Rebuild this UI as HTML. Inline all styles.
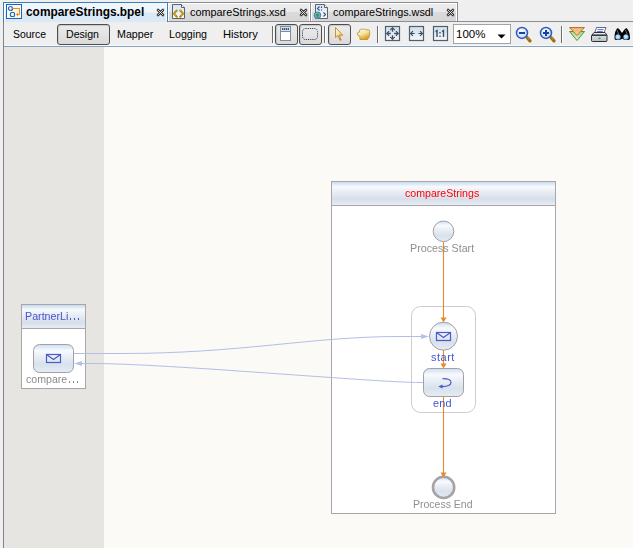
<!DOCTYPE html>
<html><head><meta charset="utf-8">
<style>
html,body{margin:0;padding:0;}
body{width:633px;height:548px;overflow:hidden;position:relative;background:#efefef;font-family:"Liberation Sans",sans-serif;}
.a{position:absolute;}
.t{position:absolute;white-space:nowrap;line-height:1;}
.g{will-change:transform;}
.btn{position:absolute;border:1px solid #4e4e4e;border-radius:3px;background:linear-gradient(#ececec 0,#e4e4e4 50%,#dadada 100%);box-shadow:inset 1px 1px 1px #c8c8c8;}
svg{position:absolute;left:0;top:0;}
</style></head><body>

<!-- tabs -->
<div class="a" style="left:3px;top:2px;width:163px;height:19px;border:1px solid #3a7fba;border-bottom:none;background:linear-gradient(#f0f7fc 0,#edf5fb 48%,#dbeaf6 52%,#d9e9f5 100%);"></div>
<div class="a" style="left:4px;top:3px;width:1px;height:18px;background:#fff;"></div>
<div class="a" style="left:166px;top:3px;width:1px;height:18px;background:#fff;"></div>
<div class="a" style="left:168px;top:2px;width:142px;height:19px;border-top:1px solid #8a8e94;background:linear-gradient(#ececec 0,#e9e9e9 45%,#dadada 50%,#d6d6d6 100%);box-shadow:inset 1px 1px 0 #fff,inset -1px 0 0 #fff;"></div>
<div class="a" style="left:310px;top:2px;width:146px;height:19px;border:1px solid #8a8e94;border-bottom:none;background:linear-gradient(#ececec 0,#e9e9e9 45%,#dadada 50%,#d6d6d6 100%);box-shadow:inset 1px 1px 0 #fff,inset -1px 0 0 #fff;"></div>
<div class="a" style="left:168px;top:21px;width:465px;height:1px;background:#8a8e94;"></div>

<div class="t" style="left:26px;top:7px;font-size:11.9px;font-weight:bold;color:#000;">compareStrings.bpel</div>
<div class="t" style="left:190px;top:7px;font-size:10.85px;color:#000;">compareStrings.xsd</div>
<div class="t" style="left:333px;top:7px;font-size:10.8px;color:#000;">compareStrings.wsdl</div>

<!-- toolbar -->
<div class="a" style="left:3px;top:22px;width:1px;height:526px;background:#7f838a;"></div>
<div class="a" style="left:4px;top:45px;width:629px;height:1px;background:#f8f8f8;"></div>
<div class="a" style="left:4px;top:46px;width:629px;height:1px;background:#86a2bf;"></div>

<div class="btn" style="left:57px;top:24px;width:51px;height:19px;"></div>
<div class="btn" style="left:275px;top:24px;width:21px;height:19px;"></div>
<div class="btn" style="left:299px;top:24px;width:21px;height:19px;"></div>
<div class="btn" style="left:328px;top:24px;width:21px;height:19px;"></div>

<div class="t" style="left:13px;top:30px;font-size:10.45px;color:#000;">Source</div>
<div class="t" style="left:66px;top:29px;font-size:10.6px;color:#000;">Design</div>
<div class="t" style="left:117px;top:29px;font-size:10.7px;color:#000;">Mapper</div>
<div class="t" style="left:169px;top:29px;font-size:10.7px;color:#000;">Logging</div>
<div class="t" style="left:223px;top:29px;font-size:11.2px;color:#000;">History</div>

<!-- combo -->
<div class="a" style="left:453px;top:24px;width:56px;height:18px;border:1px solid #a3a3a3;background:#fff;"></div>
<div class="t" style="left:456px;top:29px;font-size:11.5px;color:#000;">100%</div>

<!-- canvas -->
<div class="a" style="left:4px;top:47px;width:100px;height:501px;background:#e7e5e1;"></div>
<div class="a" style="left:104px;top:47px;width:529px;height:501px;background:#fbfaf6;"></div>

<svg width="633" height="548" viewBox="0 0 633 548">
<defs>
 <linearGradient id="pg" x1="0" y1="0" x2="0" y2="1"><stop offset="0" stop-color="#d8e4f0"/><stop offset="1" stop-color="#f8fafc"/></linearGradient>
 <linearGradient id="hdr" x1="0" y1="0" x2="0" y2="1"><stop offset="0" stop-color="#c6dcf2"/><stop offset="0.2" stop-color="#f7f9fc"/><stop offset="0.75" stop-color="#d6deea"/><stop offset="1" stop-color="#e6edf5"/></linearGradient>
 <linearGradient id="btn" x1="0" y1="0" x2="0" y2="1"><stop offset="0" stop-color="#c9def2"/><stop offset="0.22" stop-color="#f8fafd"/><stop offset="0.7" stop-color="#d8e1ec"/><stop offset="1" stop-color="#e4ecf5"/></linearGradient>
 <linearGradient id="zi" x1="0" y1="0" x2="0" y2="1"><stop offset="0" stop-color="#d4e0ea"/><stop offset="0.5" stop-color="#dfe8f0"/><stop offset="0.52" stop-color="#e8eef4"/><stop offset="1" stop-color="#f2f6f9"/></linearGradient>
 <linearGradient id="gold" x1="0" y1="0" x2="0.5" y2="1"><stop offset="0" stop-color="#fffef8"/><stop offset="0.55" stop-color="#f6e4a0"/><stop offset="1" stop-color="#dca020"/></linearGradient>
 <linearGradient id="org" x1="0" y1="0" x2="0" y2="1"><stop offset="0" stop-color="#f0b070"/><stop offset="1" stop-color="#f8d0a0"/></linearGradient>
 <linearGradient id="grn" x1="0" y1="0" x2="0" y2="1"><stop offset="0" stop-color="#a8d890"/><stop offset="1" stop-color="#e0f2d8"/></linearGradient>
 <linearGradient id="prn" x1="0" y1="0" x2="0" y2="1"><stop offset="0" stop-color="#eef0f4"/><stop offset="1" stop-color="#b8bcc4"/></linearGradient>
 <radialGradient id="lens" cx="0.45" cy="0.45" r="0.6"><stop offset="0" stop-color="#e8f6ff"/><stop offset="0.6" stop-color="#8cc8f8"/><stop offset="1" stop-color="#4a90d8"/></radialGradient>
 <radialGradient id="mag" cx="0.4" cy="0.35" r="0.7"><stop offset="0" stop-color="#ffffff"/><stop offset="0.7" stop-color="#cfe0f6"/><stop offset="1" stop-color="#b0c8ec"/></radialGradient>
</defs>

<!-- tab icons -->
<g>
 <rect x="6.5" y="4.5" width="15" height="14" fill="#fdf5df" stroke="#1565d0" stroke-width="1"/>
 <circle cx="10.5" cy="8.5" r="2" fill="#fdf5df" stroke="#1565d0" stroke-width="1.2"/>
 <rect x="10.5" y="12.5" width="4" height="4" rx="1" fill="#fdf5df" stroke="#1565d0" stroke-width="1.2"/>
 <path d="M12.5 8.5H19.5V14.5H17" fill="none" stroke="#f08a20" stroke-width="1"/>
 <path d="M16 14.5L18 12.5V16.5Z" fill="#f08a20"/>
</g>
<g>
 <path d="M172.5 4.5H181.5L184.5 7.5V18.5H172.5Z" fill="url(#pg)" stroke="#59636e" stroke-width="1"/>
 <path d="M181.5 4.5V7.5H184.5" fill="#fff" stroke="#59636e" stroke-width="1"/>
 <path d="M176.8 10.5L173.8 13.6L176.8 16.7M180.2 10.5L183.2 13.6L180.2 16.7" fill="none" stroke="#b08000" stroke-width="2" stroke-linecap="round" stroke-linejoin="round"/>
 <path d="M176.8 10.5L173.8 13.6L176.8 16.7M180.2 10.5L183.2 13.6L180.2 16.7" fill="none" stroke="#f6e4a0" stroke-width="0.8" stroke-dasharray="0.8 0.9"/>
</g>
<g>
 <path d="M315.5 4.5H324.5L327.5 7.5V18.5H315.5Z" fill="url(#pg)" stroke="#59636e" stroke-width="1"/>
 <path d="M324.5 4.5V7.5H327.5" fill="#fff" stroke="#59636e" stroke-width="1"/>
 <path d="M319.5 6.5L317.5 8.5L319.5 10.5M321.5 6.5V8M321.5 9.5V10.5M323.5 12.5L325.5 14.5L323.5 16.5" fill="none" stroke="#2d4d7a" stroke-width="1.1"/>
 <circle cx="317.5" cy="15.2" r="3.3" fill="#78b0e0" stroke="#4d78a8" stroke-width="1"/>
 <path d="M315 15.5L317.5 13L320 15.5H318.5V17.5H316.5V15.5Z" fill="#30a030"/>
</g>
<!-- close icons -->
<g fill="none" stroke-linecap="round">
 <path d="M158 10L163 15M163 10L158 15" stroke="#333" stroke-width="2.6"/>
 <path d="M158 10L163 15M163 10L158 15" stroke="#fff" stroke-width="0.8"/>
 <path d="M301 10L306 15M306 10L301 15" stroke="#333" stroke-width="2.6"/>
 <path d="M301 10L306 15M306 10L301 15" stroke="#fff" stroke-width="0.8"/>
 <path d="M448 10L453 15M453 10L448 15" stroke="#333" stroke-width="2.6"/>
 <path d="M448 10L453 15M453 10L448 15" stroke="#fff" stroke-width="0.8"/>
</g>

<!-- toolbar separators -->
<g stroke-width="1">
 <path d="M272.5 26V43" stroke="#6e6e6e"/><path d="M273.5 26V43" stroke="#fff"/>
 <path d="M324.5 26V43" stroke="#6e6e6e"/><path d="M325.5 26V43" stroke="#fff"/>
 <path d="M377.5 26V43" stroke="#6e6e6e"/><path d="M378.5 26V43" stroke="#fff"/>
 <path d="M561.5 26V43" stroke="#6e6e6e"/><path d="M562.5 26V43" stroke="#fff"/>
</g>
<!-- toolbar icons -->
<g>
 <rect x="280.5" y="26.5" width="10" height="14" fill="#fff" stroke="#7e8ea2"/>
 <rect x="281" y="27" width="9" height="4" fill="#d6e2ee"/>
 <path d="M280.5 31.5H290.5" stroke="#7e8ea2"/>
 <path d="M282 29H289.5" stroke="#1a2a3a" stroke-width="1.4" stroke-dasharray="1.3 0.6"/>
 <rect x="302.5" y="28.5" width="15" height="11" rx="3" fill="none" stroke="#2e3e5e" stroke-dasharray="1.2 1"/>
 <path d="M335.5 27.5V37.5L337.8 35.5L340.2 40.5L341.2 40L339.2 35.2H342.8Z" fill="url(#gold)" stroke="#c08a28" stroke-width="0.9" stroke-linejoin="round"/>
 <path d="M360 39.5H367.5Q369.6 37.5 369.6 34.5V31.6A1.4 1.4 0 0 0 367.1 30.4A1.4 1.4 0 0 0 364.6 29.7A1.4 1.4 0 0 0 362.1 29.7A1.4 1.4 0 0 0 359.6 30.7V32Q357.2 32 357.2 33.8Q357.5 35.8 359.8 36.2Z" fill="url(#gold)" stroke="#b88a30" stroke-width="0.8"/>
</g>
<g>
 <rect x="385.5" y="26.5" width="14" height="14" fill="url(#zi)" stroke="#4f5f6f" stroke-width="1.2"/>
 <path d="M392.5 27.8V31.8M392.5 35.2V39.2M386.8 33.5H390.8M394.2 33.5H398.2" stroke="#3d4f62" stroke-width="1.3"/>
 <path d="M390.2 30.1L392.5 27.8L394.8 30.1M390.2 36.9L392.5 39.2L394.8 36.9M389.1 31.2L386.8 33.5L389.1 35.8M395.9 31.2L398.2 33.5L395.9 35.8" fill="none" stroke="#3d4f62" stroke-width="1.2"/>
 <rect x="409.5" y="26.5" width="14" height="14" fill="url(#zi)" stroke="#4f5f6f" stroke-width="1.2"/>
 <path d="M410.6 33.5H414.6M418.4 33.5H422.4M412.9 31.2L410.6 33.5L412.9 35.8M420.1 31.2L422.4 33.5L420.1 35.8" fill="none" stroke="#3d4f62" stroke-width="1.2"/>
 <rect x="433.5" y="26.5" width="14" height="14" fill="url(#zi)" stroke="#4f5f6f" stroke-width="1.2"/>
 <path d="M435.5 31.5L437 30.5V37M442 31.5L443.5 30.5V37" fill="none" stroke="#3d4f62" stroke-width="1.4"/>
 <rect x="439.3" y="32" width="1.4" height="1.4" fill="#3d4f62"/>
 <rect x="439.3" y="35.5" width="1.4" height="1.4" fill="#3d4f62"/>
</g>
<path d="M497.5 34.5H505.5L501.5 38.5Z" fill="#000"/>
<!-- zoom out / in -->
<g>
 <path d="M527 37.5L530 40.8" stroke="#9a6a08" stroke-width="3.2" stroke-linecap="round"/>
 <path d="M527.3 37.5L529.3 39.6" stroke="#f0a020" stroke-width="1"/>
 <circle cx="522" cy="32.9" r="5.5" fill="url(#mag)" stroke="#2a5cc0" stroke-width="1.5"/>
 <path d="M519 33H525" stroke="#1a40a0" stroke-width="2"/>
 <path d="M551 37.5L554 40.8" stroke="#9a6a08" stroke-width="3.2" stroke-linecap="round"/>
 <path d="M551.3 37.5L553.3 39.6" stroke="#f0a020" stroke-width="1"/>
 <circle cx="546" cy="32.9" r="5.5" fill="url(#mag)" stroke="#2a5cc0" stroke-width="1.5"/>
 <path d="M543 33H549M546 30V36" stroke="#1a40a0" stroke-width="2"/>
</g>
<!-- chevrons, printer, binoculars -->
<g>
 <path d="M569.5 31.5H584.5L577 40.5Z" fill="url(#grn)" stroke="#4a9a30" stroke-width="1" stroke-linejoin="round"/>
 <path d="M569.5 27.5H584.5L577 35.5Z" fill="url(#org)" stroke="#c47020" stroke-width="1" stroke-linejoin="round"/>
 <path d="M596.5 27.5H606L603.8 33.5H594.5Z" fill="#fff" stroke="#4a5a72" stroke-width="0.9"/>
 <path d="M597.5 29.6H603.5M596.8 31.6H602.8" stroke="#4a58c8" stroke-width="0.9"/>
 <path d="M591.5 35.5L594 32.5H605L607 35V40.5Q607 41.5 606 41.5H592.5Q591.5 41.5 591.5 40.5Z" fill="url(#prn)" stroke="#2a3038" stroke-width="1"/>
 <path d="M592 35.2H606.5" stroke="#2a3038" stroke-width="1.5"/>
 <rect x="598.5" y="37.5" width="2" height="1.6" fill="#10c030"/>
 <path d="M614.5 38C614.5 33 615.5 29.5 617.8 28C619.5 29 620.5 31 621.5 32.5H622.5C623.5 31 624.5 29 626.2 28C628.5 29.5 630 33 630 38C630 40 628.5 40 626.5 40C624 40 622.8 39 622.3 38.5C621.8 39 620.5 40 618 40C615.5 40 614.5 40 614.5 38Z" fill="#000"/>
 <path d="M617 30L618.5 34" stroke="#888" stroke-width="0.8"/>
 <path d="M625.5 30L627 34" stroke="#888" stroke-width="0.8"/>
 <circle cx="618" cy="37" r="2.7" fill="url(#lens)"/>
 <circle cx="626" cy="37" r="2.7" fill="url(#lens)"/>
</g>

<!-- partner link -->
<rect x="21.5" y="304.5" width="64" height="84" fill="#fff" stroke="#a9a5a8"/>
<rect x="22" y="305" width="63" height="23" fill="url(#hdr)"/>
<path d="M22 328.5H85" stroke="#a9a5a8"/>
<rect x="33.5" y="344.5" width="40" height="28" rx="6" fill="url(#btn)" stroke="#a39fa3"/>
<rect x="46.5" y="354.5" width="14" height="8" fill="none" stroke="#4a5cc4" stroke-width="1.2"/>
<path d="M46.5 354.5L53.5 359.5L60.5 354.5" fill="none" stroke="#4a5cc4" stroke-width="1.2"/>

<g fill="#4656d0"><rect x="70" y="318" width="1" height="2"/><rect x="74" y="318" width="1" height="2"/><rect x="78" y="318" width="1" height="2"/></g>
<g fill="#8c8c8c"><rect x="69" y="381" width="1" height="2"/><rect x="73" y="381" width="1" height="2"/><rect x="77" y="381" width="1" height="2"/></g>
<!-- process -->
<rect x="331.5" y="181.5" width="224" height="332" fill="#fff" stroke="#a9a5a8"/>
<rect x="332" y="182" width="223" height="23" fill="url(#hdr)"/>
<path d="M332 205.5H555" stroke="#a9a5a8"/>
<rect x="411.5" y="306.5" width="64" height="106" rx="9" fill="none" stroke="#cfcccf"/>

<!-- links -->
<g fill="none" stroke="#b4bde6" stroke-width="1">
 <path d="M74 353.5H122C242 353.5 310 336.5 400 336.5H425"/>
 <path d="M423 382.5H420C375 382.5 167 363.5 92 363.5H76"/>
</g>
<path d="M421 334L429 336.5L421 339Z" fill="#b8c0e8"/>
<path d="M82 361L74 363.5L82 366Z" fill="#b8c0e8"/>

<circle cx="443.5" cy="231.3" r="10.3" fill="url(#btn)" stroke="#a39fa3"/>
<circle cx="443.5" cy="336.2" r="14" fill="url(#btn)" stroke="#a39fa3"/>
<rect x="436.5" y="332.5" width="14" height="8" fill="none" stroke="#4a5cc4" stroke-width="1.2"/>
<path d="M436.5 332.5L443.5 337.5L450.5 332.5" fill="none" stroke="#4a5cc4" stroke-width="1.2"/>
<rect x="423.5" y="368.5" width="40" height="28" rx="6" fill="url(#btn)" stroke="#a39fa3"/>
<path d="M442.5 378.6C448 378.4 451 380 451 382.5C451 385 447.5 386.8 441.5 386.6" fill="none" stroke="#4a5cc4" stroke-width="1.2"/>
<path d="M438.3 386.6L442.5 384.6V388.6Z" fill="#4a5cc4"/>
<circle cx="443.6" cy="487.4" r="10.6" fill="url(#btn)" stroke="#a6a2a6" stroke-width="2.6"/>
<!-- flow -->
<g stroke="#e8892a" stroke-width="1.1" fill="none">
 <path d="M443.5 242V320"/>
 <path d="M443.5 350V366"/>
 <path d="M443.5 397V473"/>
</g>
<g fill="#e8892a">
 <path d="M440.5 317.5L446.5 317.5L443.5 322.5Z"/>
 <path d="M440.5 363.5L446.5 363.5L443.5 368.5Z"/>
 <path d="M440.5 472.5L446.5 472.5L443.5 477.5Z"/>
</g>

</svg>

<div class="t g" style="left:25px;top:311px;font-size:10.7px;color:#4656d0;">PartnerLi</div>
<div class="t g" style="left:26px;top:374px;font-size:10.6px;color:#8c8c8c;">compare</div>
<div class="t g" style="left:405px;top:188px;font-size:10.6px;color:#ff0000;">compareStrings</div>
<div class="t g" style="left:410px;top:243px;font-size:10.7px;color:#8f8f8f;">Process Start</div>
<div class="t g" style="left:431px;top:352px;font-size:11px;letter-spacing:0.5px;color:#4656d0;">start</div>
<div class="t g" style="left:433px;top:398px;font-size:10.9px;letter-spacing:0.2px;color:#4656d0;">end</div>
<div class="t g" style="left:413px;top:499px;font-size:10.5px;color:#8f8f8f;">Process End</div>

</body></html>
